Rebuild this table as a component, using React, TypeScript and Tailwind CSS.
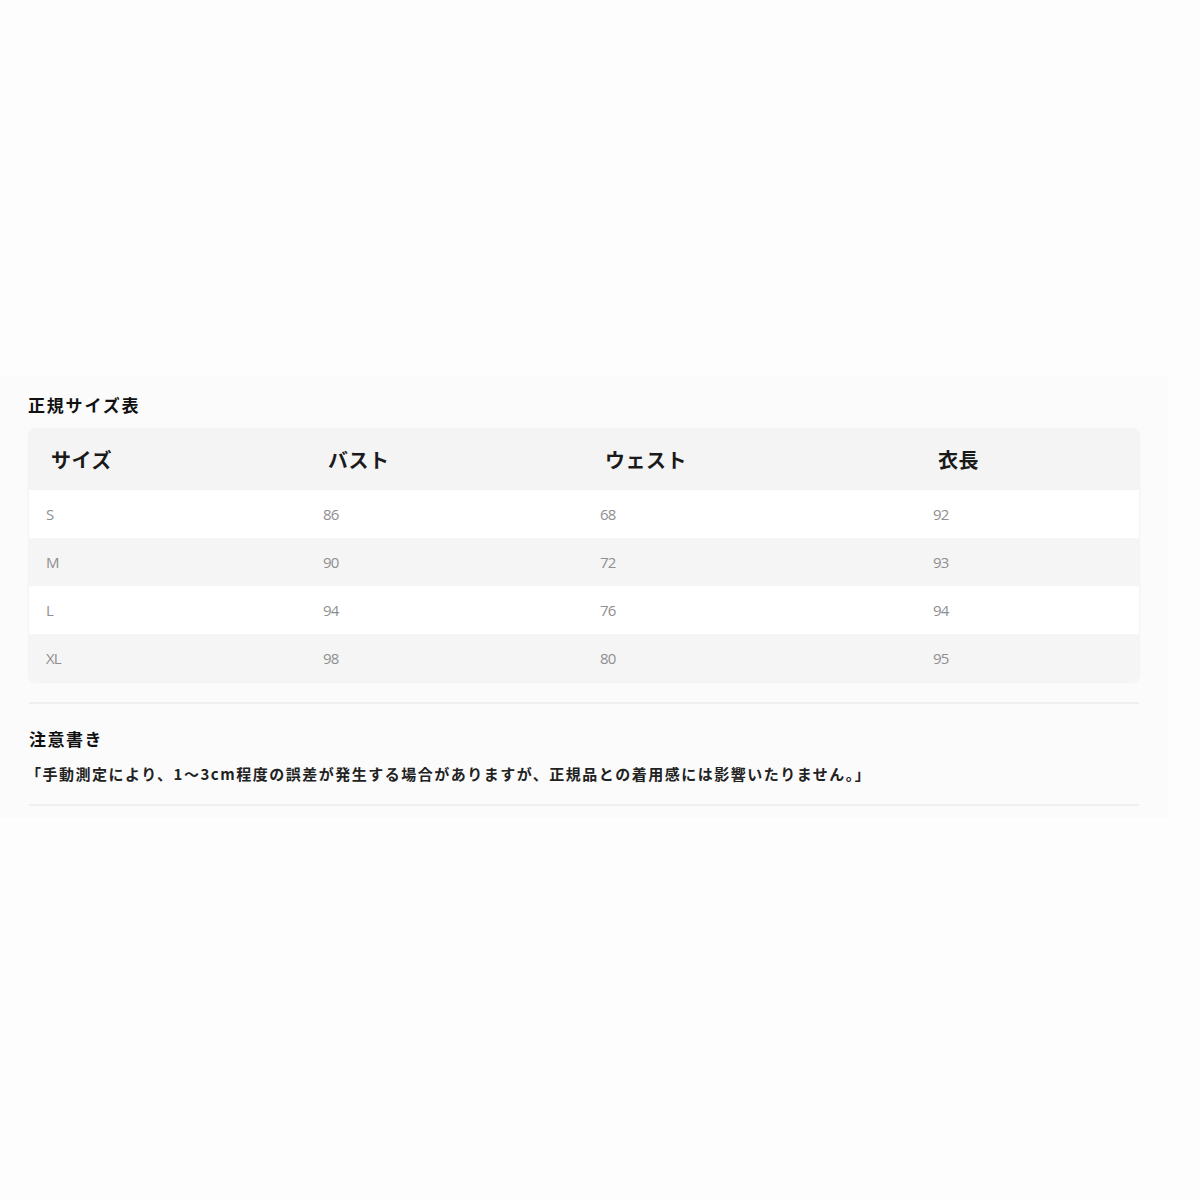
const rows = [
    ["S", "86", "68", "92"],
    ["M", "90", "72", "93"],
    ["L", "94", "76", "94"],
    ["XL", "98", "80", "95"],
];

const headers = ["サイズ", "バスト", "ウェスト", "衣長"];

const cols = "grid grid-cols-[277px_277px_333px_1fr]";

const App = () => {
    return (
        <div className="w-[1200px] h-[1200px] bg-[#fdfdfd] font-['Noto_Sans_CJK_JP',sans-serif] text-[#222]">
            <div className="h-[376px]" />
            <div className="bg-[#fbfbfb] px-[29px] pt-[16px] pb-[12px] w-[1168px]">
                <h2 className="text-[17px] leading-[26px] font-bold text-[#111] -ml-[1px] tracking-[1.8px]">正規サイズ表</h2>
                <div className="mt-[11px] rounded-[6px] overflow-hidden bg-white shadow-[0_0_3px_rgba(0,0,0,0.08)]">
                    <div className={`${cols} h-[61px] items-center bg-[#f4f4f4] px-[22px] pt-[1px]`}>
                        {headers.map((h) => (
                            <div key={h} className="text-[20px] font-bold text-[#1a1a1a] tracking-[0.5px]">{h}</div>
                        ))}
                    </div>
                    {rows.map((r, i) => (
                        <div
                            key={r[0]}
                            className={`${cols} h-[48px] items-center px-[17px] ${i % 2 === 1 ? "bg-[#f5f5f5]" : "bg-white"}`}
                        >
                            {r.map((c, j) => (
                                <div key={j} className="text-[15px] font-['Open_Sans',sans-serif] font-normal text-[#8f8f8f] tracking-[-0.8px]">{c}</div>
                            ))}
                        </div>
                    ))}
                </div>
                <div className="mt-[20px] h-[2px] bg-[#efefef]" />
                <h3 className="mt-[22px] text-[17px] leading-[26px] font-bold text-[#111] tracking-[1.5px]">注意書き</h3>
                <p className="mt-[11px] text-[15px] leading-[22px] font-bold text-[#222] -ml-[3px] tracking-[1.5px]">
                    「手動測定により、1〜3cm程度の誤差が発生する場合がありますが、正規品との着用感には影響いたりません。」
                </p>
                <div className="mt-[19px] h-[2px] bg-[#efefef]" />
            </div>
        </div>
    );
};

export default App;
